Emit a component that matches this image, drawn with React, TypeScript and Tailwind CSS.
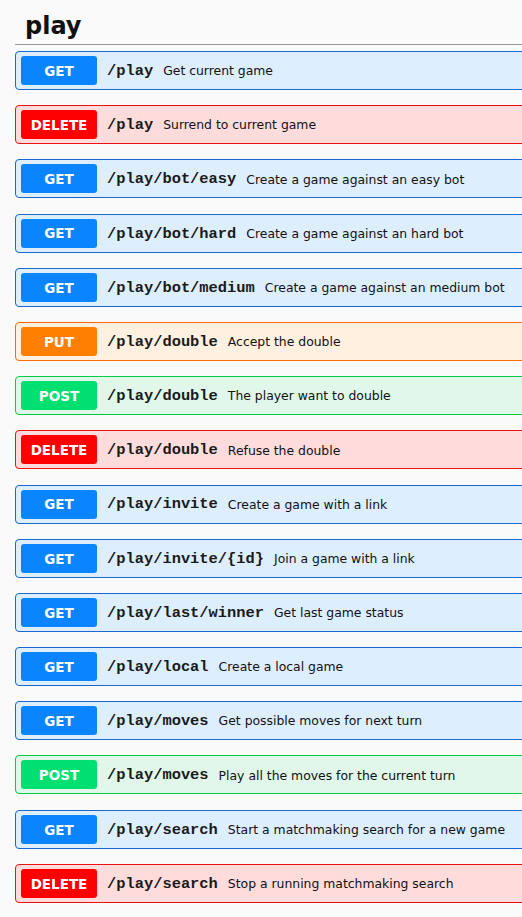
import React from "react";

type M = "GET" | "DELETE" | "PUT" | "POST";

const rows: { m: M; p: string; d: string }[] = [
  { m: "GET", p: "/play", d: "Get current game" },
  { m: "DELETE", p: "/play", d: "Surrend to current game" },
  { m: "GET", p: "/play/bot/easy", d: "Create a game against an easy bot" },
  { m: "GET", p: "/play/bot/hard", d: "Create a game against an hard bot" },
  { m: "GET", p: "/play/bot/medium", d: "Create a game against an medium bot" },
  { m: "PUT", p: "/play/double", d: "Accept the double" },
  { m: "POST", p: "/play/double", d: "The player want to double" },
  { m: "DELETE", p: "/play/double", d: "Refuse the double" },
  { m: "GET", p: "/play/invite", d: "Create a game with a link" },
  { m: "GET", p: "/play/invite/{id}", d: "Join a game with a link" },
  { m: "GET", p: "/play/last/winner", d: "Get last game status" },
  { m: "GET", p: "/play/local", d: "Create a local game" },
  { m: "GET", p: "/play/moves", d: "Get possible moves for next turn" },
  { m: "POST", p: "/play/moves", d: "Play all the moves for the current turn" },
  { m: "GET", p: "/play/search", d: "Start a matchmaking search for a new game" },
  { m: "DELETE", p: "/play/search", d: "Stop a running matchmaking search" },
];

const rowCls: Record<M, string> = {
  GET: "bg-[#ddeeff] border-[#1e66d0]",
  DELETE: "bg-[#ffdcdc] border-[#ee1111]",
  PUT: "bg-[#fff0e0] border-[#ff6a00]",
  POST: "bg-[#e0f7ea] border-[#00cc44]",
};

const badgeCls: Record<M, string> = {
  GET: "bg-[#0a84ff]",
  DELETE: "bg-[#ff0000]",
  PUT: "bg-[#ff8000]",
  POST: "bg-[#00e070]",
};

export default function App() {
  return (
    <div className="min-h-screen w-full overflow-hidden bg-[#fafafa]">
      <div className="w-[560px] pl-[15px]">
        <h3
          className="border-b border-[#9a9a9a] pl-[10px] pt-[11px] pb-[3px] text-[24px] leading-[30px] font-bold text-[#111]"
          style={{ fontFamily: '"DejaVu Sans", Verdana, sans-serif' }}
        >
          play
        </h3>
        <div className="mt-[6px] flex flex-col gap-[15.2px]">
          {rows.map((r, i) => (
            <div
              key={i}
              className={`flex h-[39px] items-center rounded-[4px] border px-[5px] ${rowCls[r.m]}`}
            >
              <div
                className={`flex h-[29px] w-[76px] shrink-0 items-center justify-center rounded-[3px] pt-[1px] text-[13.5px] font-bold text-white ${badgeCls[r.m]}`}
                style={{ fontFamily: '"DejaVu Sans", Verdana, sans-serif' }}
              >
                {r.m}
              </div>
              <span
                className="ml-[10px] pt-[2px] text-[15.4px] font-bold text-[#1a1a1a]"
                style={{ fontFamily: '"Liberation Mono", "Courier New", monospace' }}
              >
                {r.p}
              </span>
              <span
                className="ml-[10px] pt-[2px] text-[12.4px] text-[#111]"
                style={{ fontFamily: '"DejaVu Sans", Verdana, sans-serif' }}
              >
                {r.d}
              </span>
            </div>
          ))}
        </div>
      </div>
    </div>
  );
}
